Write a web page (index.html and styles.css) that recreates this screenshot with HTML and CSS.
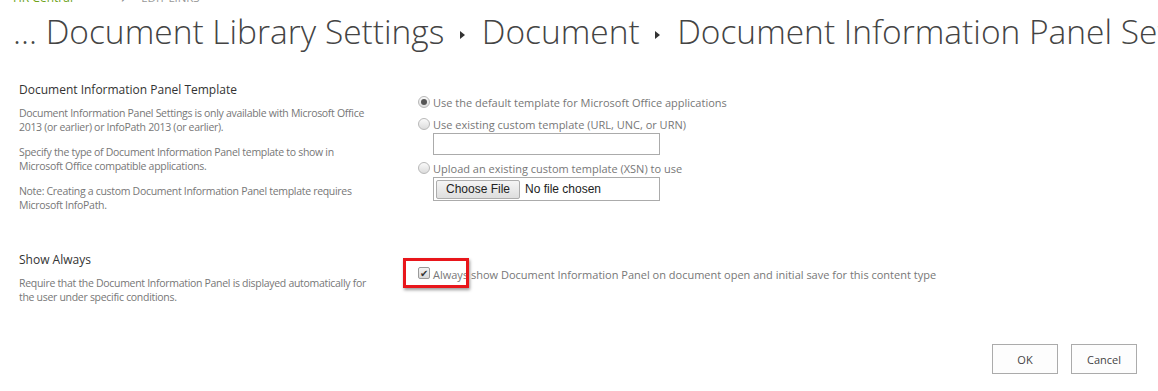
FILE: index.html
```html
<!DOCTYPE html>
<html lang="en">
<head>
    <meta charset="UTF-8">
    <title>Document Information Panel Settings</title>
    <link rel="stylesheet" href="styles.css">
</head>
<body>
    <div class="top-strip">
        <span class="site-link">HR Central</span>
        <span class="top-arrow">&#8599;</span>
        <span class="edit-links">EDIT LINKS</span>
    </div>

    <h1 class="page-title">
        ... Document Library Settings <span class="crumb-arrow"></span> Document <span class="crumb-arrow"></span> Document Information Panel Settings
    </h1>

    <div class="form">
        <!-- Template section -->
        <div class="section">
            <div class="section-info">
                <h3>Document Information Panel Template</h3>
                <p>Document Information Panel Settings is only available with Microsoft Office 2013 (or earlier) or InfoPath 2013 (or earlier).</p>
                <p>Specify the type of Document Information Panel template to show in Microsoft Office compatible applications.</p>
                <p>Note: Creating a custom Document Information Panel template requires Microsoft InfoPath.</p>
            </div>
            <div class="section-fields">
                <div class="option"><span class="radio checked"></span>Use the default template for Microsoft Office applications</div>
                <div class="option second"><span class="radio"></span>Use existing custom template (URL, UNC, or URN)</div>
                <div class="text-box"></div>
                <div class="option upload"><span class="radio"></span>Upload an existing custom template (XSN) to use</div>
                <div class="file-box">
                    <span class="file-button">Choose File</span>
                    <span class="file-name">No file chosen</span>
                </div>
            </div>
        </div>

        <!-- Show always section -->
        <div class="section show-always">
            <div class="section-info">
                <h3>Show Always</h3>
                <p>Require that the Document Information Panel is displayed automatically for the user under specific conditions.</p>
            </div>
            <div class="section-fields">
                <div class="check-row">
                    <span class="checkbox">&#10004;</span>
                    Always show Document Information Panel on document open and initial save for this content type
                    <span class="highlight"></span>
                </div>
            </div>
        </div>

        <div class="buttons">
            <button class="btn">OK</button>
            <button class="btn">Cancel</button>
        </div>
    </div>
</body>
</html>
```

FILE: styles.css
```css
/* Page */
body {
    margin: 0;
    font-family: "Open Sans", "Noto Sans", sans-serif;
    color: #444;
    background: #fff;
    overflow: hidden;
}

/* Cut-off top navigation */
.top-strip {
    height: 4px;
    overflow: hidden;
    font-size: 12px;
    line-height: 10px;
    white-space: nowrap;
    padding-left: 13px;
}

.top-strip span {
    position: relative;
    top: -7px;
}

.site-link {
    color: #6ea319;
}

.top-arrow {
    color: #888;
    margin-left: 44px;
}

.edit-links {
    color: #999;
    font-size: 11.5px;
    margin-left: 8px;
}

/* Title */
.page-title {
    margin: 0;
    padding: 6px 0 0 13px;
    height: 50px;
    font-weight: 300;
    font-size: 33.5px;
    line-height: 42px;
    color: #444;
    white-space: nowrap;
    overflow: hidden;
}

.crumb-arrow {
    display: inline-block;
    width: 0;
    height: 0;
    border-top: 4px solid transparent;
    border-bottom: 4px solid transparent;
    border-left: 5px solid #333;
    vertical-align: middle;
    margin: 0 8px 0 7px;
}

/* Form */
.form {
    padding-top: 22px;
}

.section {
    display: flex;
}

.section-info {
    width: 360px;
    padding-left: 19px;
    margin-right: 39px;
}

.section-info h3 {
    margin: 0 0 8px;
    font-size: 12px;
    line-height: 16px;
    font-weight: 400;
    color: #333;
}

.section-info p {
    margin: 0 0 11px;
    font-size: 10.5px;
    line-height: 14px;
    letter-spacing: -0.3px;
    color: #777;
}

.section-fields {
    padding-top: 10px;
    font-size: 11px;
    color: #777;
}

.option {
    display: flex;
    align-items: center;
    height: 20px;
}

.option.second {
    margin-top: 2px;
}

.option.upload {
    margin-top: 3px;
}

.radio {
    display: inline-block;
    box-sizing: border-box;
    width: 12px;
    height: 12px;
    margin: 0 3px 0 0;
    border: 1px solid #b8b8b8;
    border-radius: 50%;
    background: linear-gradient(#fafafa, #dcdcdc);
    position: relative;
}

.radio.checked::after {
    content: "";
    position: absolute;
    left: 2px;
    top: 2px;
    width: 6px;
    height: 6px;
    border-radius: 50%;
    background: #555;
}

.text-box {
    margin: -1px 0 0 15px;
    width: 227px;
    height: 22px;
    box-sizing: border-box;
    border: 1px solid #ababab;
}

.file-box {
    margin: -1px 0 0 15px;
    width: 227px;
    height: 24px;
    box-sizing: border-box;
    border: 1px solid #ababab;
    display: flex;
    align-items: center;
    padding-left: 2px;
    font-family: "Liberation Sans", Arial, sans-serif;
    font-size: 12px;
    color: #222;
}

.file-button {
    box-sizing: border-box;
    height: 19px;
    width: 84px;
    border: 1px solid #adadad;
    border-radius: 2px;
    background: linear-gradient(#f5f5f5, #dedede);
    text-align: center;
    line-height: 17px;
    margin-right: 5px;
}

/* Show always */
.show-always {
    margin-top: 29px;
}

.show-always .section-fields {
    padding-top: 13px;
}

.check-row {
    position: relative;
    display: flex;
    align-items: center;
    height: 18px;
    color: #777;
    white-space: nowrap;
}

.checkbox {
    display: inline-block;
    box-sizing: border-box;
    width: 12px;
    height: 12px;
    margin: -2px 3px 0 0;
    border: 1px solid #9a9a9a;
    border-radius: 2px;
    background: linear-gradient(#f4f4f4, #d8d8d8);
    font-size: 10px;
    line-height: 10px;
    text-align: center;
    color: #333;
}

.highlight {
    position: absolute;
    left: -15px;
    top: -7px;
    width: 66px;
    height: 30px;
    box-sizing: border-box;
    border: 3px solid #e8161b;
    box-shadow: 1px 2px 3px rgba(0, 0, 0, 0.4);
}

/* Buttons */
.buttons {
    display: flex;
    justify-content: flex-end;
    gap: 13px;
    padding: 29px 21px 0 0;
}

.btn {
    width: 66px;
    height: 30px;
    border: 1px solid #ababab;
    background: #fdfdfd;
    font-family: "Open Sans", "Noto Sans", sans-serif;
    font-size: 11px;
    color: #444;
    padding: 0;
}
```
